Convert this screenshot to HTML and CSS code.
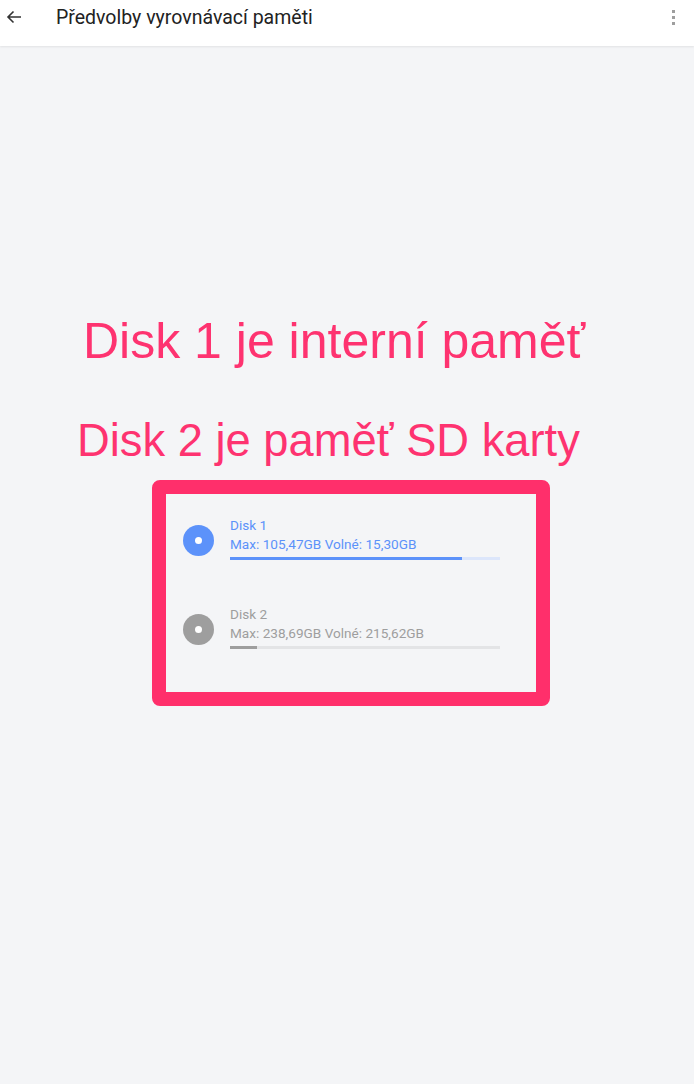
FILE: index.html
```html
<!DOCTYPE html>
<html lang="cs">
<head>
  <meta charset="UTF-8">
  <title>Předvolby vyrovnávací paměti</title>
  <link rel="stylesheet" href="styles.css">
</head>
<body>
  <header class="topbar">
    <svg class="back" width="16" height="14" viewBox="0 0 16 14">
      <path d="M15 7H2M7.5 1.5L2 7l5.5 5.5" fill="none" stroke="#333" stroke-width="1.6"/>
    </svg>
    <h1 class="title">Předvolby vyrovnávací paměti</h1>
    <div class="menu"><span></span><span></span><span></span></div>
  </header>

  <main class="content">
    <p class="note note-1">Disk 1 je interní paměť</p>
    <p class="note note-2">Disk 2 je paměť SD karty</p>

    <div class="disks">
      <div class="disk disk-active">
        <div class="disk-icon"><span></span></div>
        <div class="disk-info">
          <div class="disk-name">Disk 1</div>
          <div class="disk-size">Max: 105,47GB Volné: 15,30GB</div>
          <div class="bar"><div class="bar-fill" style="width: 86%"></div></div>
        </div>
      </div>
      <div class="disk">
        <div class="disk-icon"><span></span></div>
        <div class="disk-info">
          <div class="disk-name">Disk 2</div>
          <div class="disk-size">Max: 238,69GB Volné: 215,62GB</div>
          <div class="bar"><div class="bar-fill" style="width: 10%"></div></div>
        </div>
      </div>
    </div>
  </main>
</body>
</html>
```

FILE: styles.css
```css
body {
  margin: 0;
  background: #f4f5f7;
  font-family: Roboto, 'Noto Sans', sans-serif;
}

.topbar {
  height: 46px;
  background: #fff;
  display: flex;
  align-items: center;
  box-shadow: 0 1px 2px rgba(0,0,0,0.08);
}

.back {
  margin-left: 6px;
  margin-top: -12px;
}

.title {
  margin: -12px 0 0 34px;
  font-size: 19.5px;
  font-weight: 400;
  color: #222;
  flex: 1;
}

.menu {
  display: flex;
  flex-direction: column;
  gap: 3px;
  margin: -12px 19px 0 0;
}

.menu span {
  width: 3px;
  height: 3px;
  background: #9e9e9e;
}

.content {
  padding-top: 270px;
}

.note {
  margin: 0;
  font-family: 'Liberation Sans', Arial, sans-serif;
  color: #fe3370;
  line-height: 1;
}

.note-1 {
  font-size: 50px;
  padding-left: 83px;
}

.note-2 {
  font-size: 45.3px;
  padding-left: 77px;
  margin-top: 52px;
}

.disks {
  width: 370px;
  margin: 17px 0 0 152px;
  border: 14px solid #ff2f6b;
  border-radius: 8px;
  padding: 22px 0 43px;
  display: flex;
  flex-direction: column;
  gap: 45px;
}

.disk {
  display: flex;
  align-items: flex-start;
  color: #9e9e9e;
}

.disk-icon {
  width: 31px;
  height: 31px;
  border-radius: 50%;
  background: #9e9e9e;
  margin: 9px 16px 0 17px;
  display: flex;
  align-items: center;
  justify-content: center;
}

.disk-icon span {
  width: 7px;
  height: 7px;
  border-radius: 50%;
  background: #fff;
}

.disk-info {
  font-size: 13.6px;
  line-height: 19px;
}

.bar {
  width: 270px;
  height: 3px;
  margin-top: 3px;
  background: #e3e4e6;
}

.bar-fill {
  height: 100%;
  background: #9e9e9e;
}

.disk-active {
  color: #5c92fa;
}

.disk-active .disk-icon,
.disk-active .bar-fill {
  background: #5c92fa;
}

.disk-active .bar {
  background: #dce6fb;
}
```
